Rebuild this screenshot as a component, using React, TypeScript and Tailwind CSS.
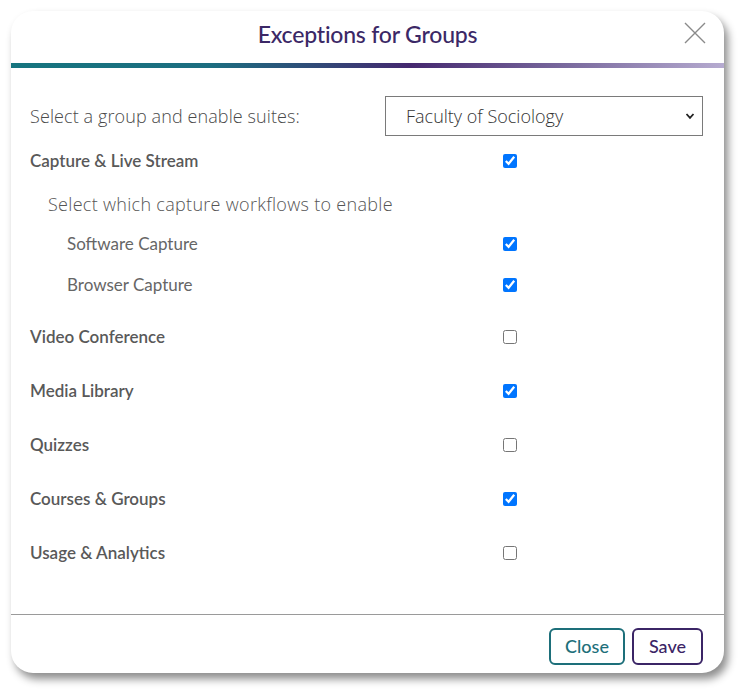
import React, { useState } from 'react';

interface Suite {
  label: string;
  checked: boolean;
}

const suites: Suite[] = [
  { label: 'Video Conference', checked: false },
  { label: 'Media Library', checked: true },
  { label: 'Quizzes', checked: false },
  { label: 'Courses & Groups', checked: true },
  { label: 'Usage & Analytics', checked: false },
];

const Check = ({ checked }: { checked: boolean }) => {
  const [on, setOn] = useState(checked);
  return (
    <div className="w-[200px] flex items-center">
      <input
        type="checkbox"
        checked={on}
        onChange={() => setOn(!on)}
        className="w-[14px] h-[14px] m-0"
      />
    </div>
  );
};

export default function App() {
  return (
    <div className="bg-white w-[743px] h-[693px] pt-[11px] pl-[11px]" style={{ fontFamily: 'Lato, "Open Sans", sans-serif' }}>
      <div className="w-[713px] h-[662px] bg-white rounded-[22px] shadow-[4px_6px_8px_rgba(0,0,0,0.45)] flex flex-col overflow-hidden">
        {/* Header */}
        <div className="relative h-[52px] flex items-start justify-center pt-[8px]">
          <h2 className="text-[23px] leading-[31px] text-[#3b2866] font-medium tracking-[-0.2px]">Exceptions for Groups</h2>
          <button className="absolute right-[17px] top-[10px] text-[#8a8a8a]">
            <svg width="24" height="24" viewBox="0 0 24 24" fill="none" stroke="currentColor" strokeWidth="1.4">
              <path d="M2 2L22 22M22 2L2 22" />
            </svg>
          </button>
        </div>
        <div className="h-[5px] bg-[linear-gradient(90deg,#16757f_0%,#1c6d80_28%,#2f4c78_42%,#45286f_56%,#7a6a9e_78%,#b6abd0_100%)]" />

        {/* Body */}
        <div className="h-[546px] pl-[19px] pr-[21px] pt-[28px] text-[#555]">
          <div className="flex items-center h-[40px]">
            <div className="flex-1 text-[18px] font-light text-[#4a4a4a] tracking-[0.1px]" style={{ fontFamily: '"Open Sans", sans-serif' }}>
              Select a group and enable suites:
            </div>
            <div className="relative w-[318px] h-[40px]">
              <select
                className="appearance-none w-full h-full border border-[#7a7a7a] bg-white pl-[20px] text-[18px] font-light text-[#333] outline-none"
                style={{ fontFamily: '"Open Sans", sans-serif' }}
                defaultValue="soc"
              >
                <option value="soc">Faculty of Sociology</option>
              </select>
              <svg className="absolute right-[8px] top-[15px] pointer-events-none" width="10" height="10" viewBox="0 0 10 10" fill="none" stroke="#222" strokeWidth="1.8">
                <path d="M1.5 3L5 6.8L8.5 3" />
              </svg>
            </div>
          </div>

          <div className="flex items-center h-[40px] mt-[5px]">
            <div className="flex-1 text-[17px] font-semibold text-[#595959]">Capture &amp; Live Stream</div>
            <Check checked />
          </div>
          <div className="flex items-center h-[40px] mt-[3px] pl-[18px]">
            <div className="flex-1 text-[18px] font-light text-[#555] tracking-[0.3px]" style={{ fontFamily: '"Open Sans", sans-serif' }}>
              Select which capture workflows to enable
            </div>
          </div>
          <div className="flex items-center h-[40px] pl-[37px]">
            <div className="flex-1 text-[17px] text-[#666]">Software Capture</div>
            <Check checked />
          </div>
          <div className="flex items-center h-[40px] mt-[1px] pl-[37px]">
            <div className="flex-1 text-[17px] text-[#666]">Browser Capture</div>
            <Check checked />
          </div>

          <div className="flex flex-col gap-[14px] mt-[12px]">
            {suites.map((s) => (
              <div key={s.label} className="flex items-center h-[40px]">
                <div className="flex-1 text-[17px] font-semibold text-[#595959]">{s.label}</div>
                <Check checked={s.checked} />
              </div>
            ))}
          </div>
        </div>

        {/* Footer */}
        <div className="border-t border-[#9a9a9a] flex justify-end gap-[7px] pt-[13px] pr-[21px]">
          <button className="w-[76px] h-[37px] rounded-[6px] border-2 border-[#1d6f7a] text-[#1d6f7a] text-[18px] font-medium">
            Close
          </button>
          <button className="w-[71px] h-[37px] rounded-[6px] border-2 border-[#3b2566] text-[#3b2566] text-[18px] font-medium">
            Save
          </button>
        </div>
      </div>
    </div>
  );
}
